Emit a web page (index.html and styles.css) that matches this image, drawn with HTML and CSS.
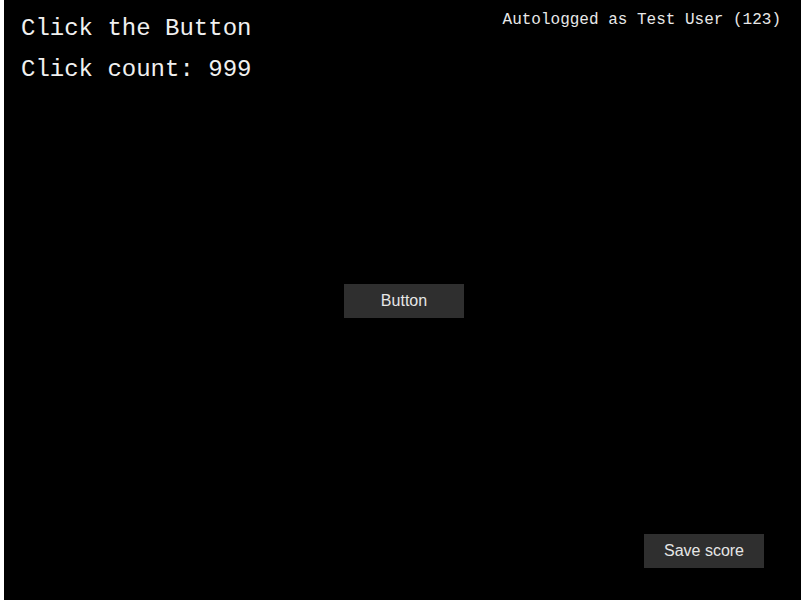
FILE: index.html
```html
<!DOCTYPE html>
<html lang="en">
<head>
<meta charset="utf-8">
<title>Click the Button</title>
<link rel="stylesheet" href="styles.css">
</head>
<body>
<div class="stage">
  <div class="top">
    <div class="header">
      <h1 class="title">Click the Button</h1>
      <div class="user">Autologged as Test User (123)</div>
    </div>
    <p class="count">Click count: 999</p>
  </div>
  <button class="btn main-btn" type="button">Button</button>
  <button class="btn save-btn" type="button">Save score</button>
</div>
</body>
</html>
```
FILE: styles.css
```css
html, body {
  margin: 0;
  padding: 0;
  background: #ffffff;
  overflow: hidden;
}
.stage {
  margin-left: 4px;
  width: 797px;
  height: 600px;
  background: #000000;
  display: grid;
  grid-template: 1fr / 1fr;
  color: #f0f0f0;
}
.top {
  grid-area: 1 / 1;
  align-self: start;
}
.header {
  display: flex;
  justify-content: space-between;
  align-items: flex-start;
  padding: 0 20px 0 17px;
}
.title {
  margin: 15px 0 0;
  font: normal 24px/27px "Liberation Mono", "Courier New", monospace;
  color: #f0f0f0;
}
.user {
  margin-top: 11px;
  font: 16px/18px "Liberation Mono", "Courier New", monospace;
  color: #e8e8e8;
}
.count {
  margin: 14px 0 0;
  padding-left: 17px;
  font: 24px/27px "Liberation Mono", "Courier New", monospace;
  color: #f0f0f0;
}
.btn {
  grid-area: 1 / 1;
  width: 120px;
  height: 34px;
  border: none;
  padding: 0;
  background: #2f2f2f;
  color: #e6e6e6;
  font: 16px "Liberation Sans", Arial, sans-serif;
}
.main-btn {
  align-self: center;
  justify-self: center;
  margin: 2px 0 0 3px;
}
.save-btn {
  align-self: end;
  justify-self: end;
  margin: 0 37px 32px 0;
}
```
